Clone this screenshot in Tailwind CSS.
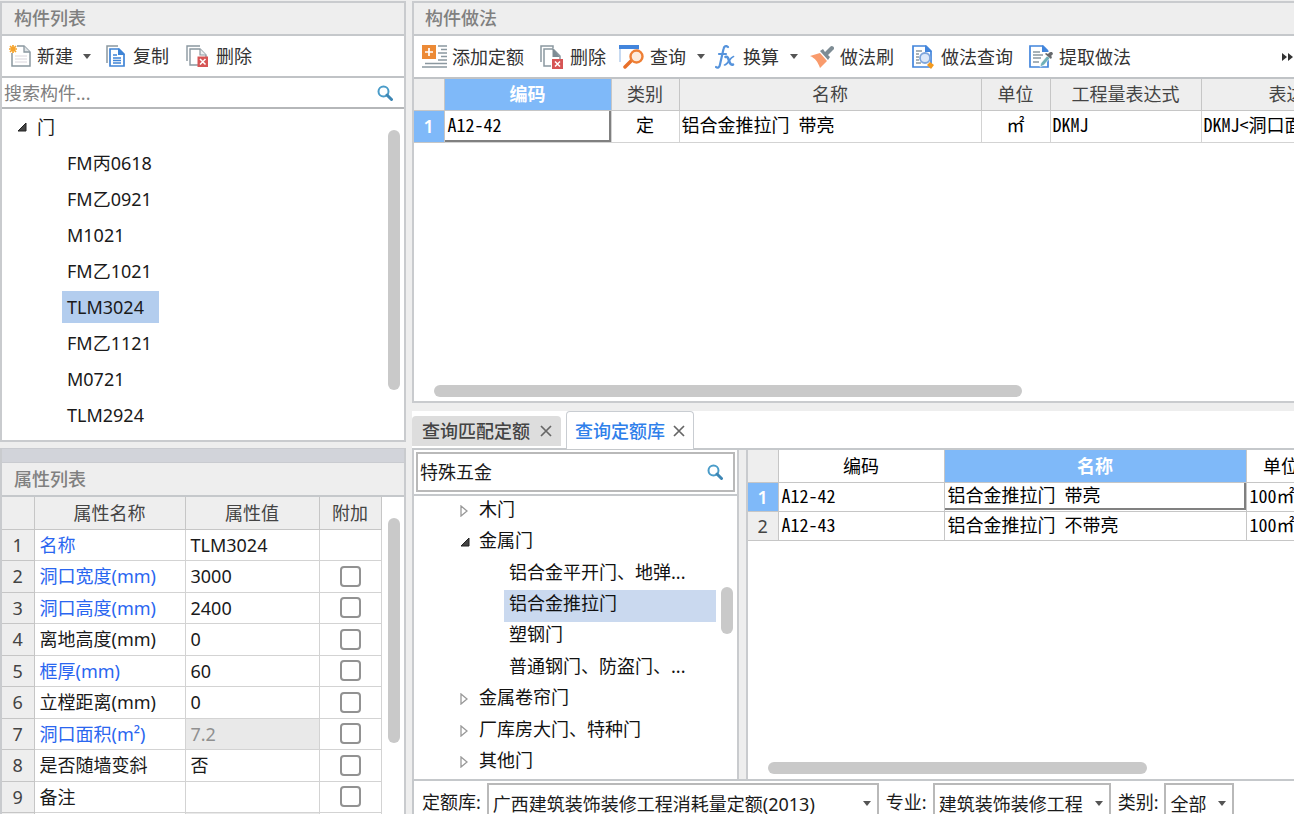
<!DOCTYPE html>
<html lang="zh-CN">
<head>
<meta charset="utf-8">
<title>构件做法</title>
<script src="https://cdn.jsdelivr.net/npm/@tailwindcss/browser@4"></script>
</head>
<body class="flex h-screen gap-[6px] overflow-hidden bg-[#eeeeee] pt-px font-['Noto_Sans','Noto_Sans_CJK_SC',sans-serif] text-[18px] leading-6 text-[#1a1a1a]">

<svg class="hidden">
  <symbol id="search" viewBox="0 0 16 16"><circle cx="6.5" cy="6.5" r="5" fill="none" stroke="#4a9cc9" stroke-width="2"/><path d="M10 10l4.5 4.5" stroke="#3d86b4" stroke-width="3" stroke-linecap="round"/></symbol>
  <symbol id="caret" viewBox="0 0 8 5"><path d="M0 0h8L4 5z" fill="#555"/></symbol>
  <symbol id="open" viewBox="0 0 10 10"><path d="M9 1v8H1z" fill="#444" stroke="#222"/></symbol>
  <symbol id="closed" viewBox="0 0 8 12"><path d="M1 1l6 5-6 5z" fill="#fff" stroke="#999" stroke-width="1.3"/></symbol>
  <symbol id="close" viewBox="0 0 12 12"><path d="M1 1l10 10M11 1L1 11" stroke="#666" stroke-width="1.7"/></symbol>
</svg>

<!-- Left column -->
<aside class="flex w-[406px] shrink-0 flex-col gap-[6px]">
  <section class="flex h-[441px] shrink-0 flex-col border-x-2 border-y-2 border-[#c9cbce] bg-white">
    <h2 class="h-[33px] shrink-0 border-b-2 border-[#c5c8cb] bg-[#eeeeee] pl-3 font-medium leading-[30px] text-[#808080]">构件列表</h2>
    <div class="flex h-[42px] shrink-0 items-center border-b-2 border-[#c0c3c6] pl-[7px] text-[#333]">
      <button class="flex items-center gap-[6px]">
        <svg class="h-[22px] w-[22px]" viewBox="0 0 22 22"><path d="M3 1h12l6 6v14H3z" fill="#fff" stroke="#8b98a0" stroke-width="1.5"/><path d="M15 1v6h6" fill="#dfe3e6" stroke="#8b98a0" stroke-width="1.3"/><path d="M6 11h12M6 14h12M6 17h12" stroke="#d9d5dc"/><path d="M0 0h8v8H0z" fill="#fff"/><path d="M4 0v8M0 4h8M1 1l6 6M7 1L1 7" stroke="#f5a32c" stroke-width="1.7"/></svg>
        新建<svg class="ml-1 h-[5px] w-2"><use href="#caret"/></svg></button>
      <button class="ml-[15px] flex items-center gap-2">
        <svg class="h-[22px] w-[19px]" viewBox="0 0 19 22"><path d="M1 18V1h11" fill="none" stroke="#8b98a0" stroke-width="1.5"/><path d="M4 4h9l5 5v12H4z" fill="#fff" stroke="#3f84d6" stroke-width="1.7"/><path d="M12 3v7h7z" fill="#3f84d6"/><path d="M7 10h4M7 13h8M7 15.500h8M7 18h8" stroke="#3f84d6" stroke-width="1.3"/></svg>复制</button>
      <button class="ml-[17px] flex items-center gap-2">
        <svg class="h-[22px] w-[22px]" viewBox="0 0 22 22"><path d="M1 16V1h13" fill="none" stroke="#8b98a0" stroke-width="1.4"/><path d="M12 20H4V4h10l6 6v3" fill="#fff" stroke="#8b98a0" stroke-width="1.4"/><path d="M14 4v6h6" fill="#eef0f1" stroke="#8b98a0" stroke-width="1.2"/><path d="M11.500 11.500H22V22H11.500z" fill="#d65555"/><path d="M14 14l5.500 5.500M19.500 14L14 19.500" stroke="#fff" stroke-width="1.5"/></svg>删除</button>
    </div>
    <label class="flex h-[31px] shrink-0 items-center border-b-2 border-[#b5b7b9] pl-[2px] pr-[11px]">
      <input aria-label="搜索构件" placeholder="搜索构件..." class="min-w-0 flex-1 outline-none placeholder:text-[#808080]">
      <svg class="h-4 w-4"><use href="#search"/></svg>
    </label>
    <div class="flex min-h-0 flex-1 justify-between pr-1">
      <ul class="pl-[15px] leading-8">
        <li>
          <div class="flex h-9 items-center gap-[10px]"><svg class="h-[10px] w-[10px]"><use href="#open"/></svg>门</div>
          <ul class="pl-[45px]">
            <li class="flex h-9 items-center"><span class="px-[5px]">FM丙0618</span></li>
            <li class="flex h-9 items-center"><span class="px-[5px]">FM乙0921</span></li>
            <li class="flex h-9 items-center"><span class="px-[5px]">M1021</span></li>
            <li class="flex h-9 items-center"><span class="px-[5px]">FM乙1021</span></li>
            <li class="flex h-9 items-center"><span class="bg-[#b3cdee] pl-[5px] pr-[15px]">TLM3024</span></li>
            <li class="flex h-9 items-center"><span class="px-[5px]">FM乙1121</span></li>
            <li class="flex h-9 items-center"><span class="px-[5px]">M0721</span></li>
            <li class="flex h-9 items-center"><span class="px-[5px]">TLM2924</span></li>
          </ul>
        </li>
      </ul>
      <div class="mt-[21px] h-[260px] w-3 rounded-full bg-[#c9c9c9]"></div>
    </div>
  </section>

  <section class="flex min-h-0 flex-1 flex-col overflow-hidden border-x-2 border-[#c9cbce] bg-white">
    <div class="h-[15px] shrink-0 border-y border-[#c9cbd0] bg-[#d2d4da]"></div>
    <h2 class="h-[34px] shrink-0 border-b-2 border-[#c5c8cb] bg-[#eeeeee] pl-3 font-medium leading-8 text-[#808080]">属性列表</h2>
    <div class="flex min-h-0 flex-1 items-start justify-between pr-1">
      <table class="w-[379px] table-fixed border-collapse [&_td]:border-b [&_td]:border-r [&_td]:border-[#d3d3d3] [&_td]:p-0 [&_th]:border-b [&_th]:border-r [&_th]:border-[#c6c6c6] [&_th]:bg-[#eeeeee] [&_th]:p-0 [&_th]:font-normal [&_th]:text-[#444]">
        <colgroup><col class="w-8"><col class="w-[151px]"><col class="w-[134px]"><col class="w-[62px]"></colgroup>
        <thead><tr class="h-8"><th></th><th>属性名称</th><th>属性值</th><th>附加</th></tr></thead>
        <tbody class="[&>tr]:h-[31px] [&>tr:nth-child(even)]:h-8">
          <tr><th>1</th><td><span class="pl-[5px] text-[#2a66f0]">名称</span></td><td><span class="pl-[5px]">TLM3024</span></td><td></td></tr>
          <tr><th>2</th><td><span class="pl-[5px] text-[#2a66f0]">洞口宽度(mm)</span></td><td><span class="pl-[5px]">3000</span></td><td><input type="checkbox" aria-label="附加 洞口宽度" class="mx-auto block size-[21px] appearance-none rounded border-2 border-[#929292]"></td></tr>
          <tr><th>3</th><td><span class="pl-[5px] text-[#2a66f0]">洞口高度(mm)</span></td><td><span class="pl-[5px]">2400</span></td><td><input type="checkbox" aria-label="附加 洞口高度" class="mx-auto block size-[21px] appearance-none rounded border-2 border-[#929292]"></td></tr>
          <tr><th>4</th><td><span class="pl-[5px]">离地高度(mm)</span></td><td><span class="pl-[5px]">0</span></td><td><input type="checkbox" aria-label="附加 离地高度" class="mx-auto block size-[21px] appearance-none rounded border-2 border-[#929292]"></td></tr>
          <tr><th>5</th><td><span class="pl-[5px] text-[#2a66f0]">框厚(mm)</span></td><td><span class="pl-[5px]">60</span></td><td><input type="checkbox" aria-label="附加 框厚" class="mx-auto block size-[21px] appearance-none rounded border-2 border-[#929292]"></td></tr>
          <tr><th>6</th><td><span class="pl-[5px]">立樘距离(mm)</span></td><td><span class="pl-[5px]">0</span></td><td><input type="checkbox" aria-label="附加 立樘距离" class="mx-auto block size-[21px] appearance-none rounded border-2 border-[#929292]"></td></tr>
          <tr><th>7</th><td><span class="pl-[5px] text-[#2a66f0]">洞口面积(m²)</span></td><td class="bg-[#e9e9e9]"><span class="pl-[5px] text-[#909090]">7.2</span></td><td><input type="checkbox" aria-label="附加 洞口面积" class="mx-auto block size-[21px] appearance-none rounded border-2 border-[#929292]"></td></tr>
          <tr><th>8</th><td><span class="pl-[5px]">是否随墙变斜</span></td><td><span class="pl-[5px]">否</span></td><td><input type="checkbox" aria-label="附加 是否随墙变斜" class="mx-auto block size-[21px] appearance-none rounded border-2 border-[#929292]"></td></tr>
          <tr><th>9</th><td><span class="pl-[5px]">备注</span></td><td></td><td><input type="checkbox" aria-label="附加 备注" class="mx-auto block size-[21px] appearance-none rounded border-2 border-[#929292]"></td></tr>
          <tr><th></th><td></td><td class="bg-[#e9e9e9]"></td><td></td></tr>
        </tbody>
      </table>
      <div class="mt-[21px] h-[225px] w-3 rounded-full bg-[#c9c9c9]"></div>
    </div>
  </section>
</aside>

<!-- Right column -->
<main class="flex min-w-0 flex-1 flex-col">
  <section class="flex h-[402px] shrink-0 flex-col overflow-hidden border-y-2 border-l-2 border-[#c9cbce] bg-white">
    <h2 class="h-[33px] shrink-0 border-b-2 border-[#c5c8cb] bg-[#eeeeee] pl-[11px] font-medium leading-[30px] text-[#808080]">构件做法</h2>
    <div class="flex h-[43px] shrink-0 items-center border-b-2 border-[#c0c3c6] pl-2 pr-px text-[#333] [&>button]:flex [&>button]:shrink-0 [&>button]:items-center">
      <button class="gap-[5px]">
        <svg class="h-6 w-[25px]" viewBox="0 0 25 24"><path d="M0 0h14v14H0z" fill="#ec8a36"/><path d="M7 3v8M3 7h8" stroke="#fff" stroke-width="1.7"/><path d="M16 1h9M19 4.500h6M16 8h9M19 11.500h6M16 15h9M3 18.500h22M0 22h25" stroke="#8b98a0" stroke-width="1.5"/></svg>添加定额</button>
      <button class="ml-[16px] gap-[7px]">
        <svg class="h-6 w-[23px]" viewBox="0 0 23 24"><path d="M1 17V1h12v2" fill="none" stroke="#8b98a0" stroke-width="1.5"/><path d="M11 21H4V4h9l7 7v3" fill="#fff" stroke="#8b98a0" stroke-width="1.5"/><path d="M12.500 3v9H20z" fill="#7e8c94"/><path d="M12 14h11v10H12z" fill="#d65555"/><path d="M15 16.500l5 5M20 16.500l-5 5" stroke="#fff" stroke-width="1.5"/></svg>删除</button>
      <button class="ml-[13px] gap-[5px]">
        <svg class="h-6 w-[26px]" viewBox="0 0 26 24"><path d="M1 4v13M0 3h19v3" fill="none" stroke="#8fb4e3"/><path d="M0 0h20v4H0z" fill="#4285dc"/><path d="M6 22l7-7" stroke="#e8702a" stroke-width="3.500" stroke-linecap="round"/><circle cx="17.500" cy="11.500" r="6" fill="#fdeadb" stroke="#ee7f35" stroke-width="2.400"/></svg>查询<svg class="ml-[6px] h-[5px] w-2"><use href="#caret"/></svg></button>
      <button class="ml-[10px] gap-2">
        <svg class="h-6 w-5" viewBox="0 0 20 24" fill="none" stroke="#5593dc" stroke-linecap="round"><path d="M13 2C11 0 9 1.500 8.500 4L5 19.500C4.500 22.500 2.500 23.500 1 22M4 9h7" stroke-width="2.200"/><path d="M10.500 12c4-2 3 9.500 7.500 7.500" stroke-width="2.600"/><path d="M18.500 11.500c-4 1-5 8-9 8.500" stroke-width="1.700"/></svg>换算<svg class="ml-[3px] h-[5px] w-2"><use href="#caret"/></svg></button>
      <button class="ml-[12px] gap-[6px]">
        <svg class="h-6 w-6" viewBox="0 0 24 24"><path d="M0 11l10-3 7 8-7 7C8 17 5 13 0 11z" fill="#f99b6c"/><path d="M10 6l3-2 2 3 5-5c2-3 6 1 3 3l-5 5 2 2-2 3z" fill="#7e8c94"/></svg>做法刷</button>
      <button class="ml-[18px] gap-[6px]">
        <svg class="h-6 w-[23px]" viewBox="0 0 23 24"><path d="M1 1h13l5 5v16H1z" fill="#fff" stroke="#4285dc" stroke-width="1.700"/><path d="M13 0v7h7z" fill="#4285dc"/><path d="M4 6h6M4 9h3M4 12h3M4 15h3M4 18h5" stroke="#8b98a0" stroke-width="1.300"/><circle cx="13" cy="13" r="5" fill="#dce8f8" stroke="#7ea6dc" stroke-width="1.800"/><path d="M15 20l3-3 4 3-3 4z" fill="#f39a1f"/></svg>做法查询</button>
      <button class="ml-[16px] gap-[6px]">
        <svg class="h-6 w-6" viewBox="0 0 24 24"><path d="M19 12v10H1V1h13l5 5" fill="#fff" stroke="#4285dc" stroke-width="1.700"/><path d="M13 0v7h7z" fill="#4285dc"/><path d="M4 7h7M4 10h10M4 13h8M4 17h6" stroke="#8b98a0" stroke-width="1.300"/><path d="M11 22l1-4 6-7 3 2-6 7z" fill="#6fb0b8" stroke="#fff" stroke-width=".6"/><path d="M16 9l6 5 1-2-1-1c3-2 2-4 0-4s-2 1-3 2l-2-1z" fill="#66696c"/></svg>提取做法</button>
      <button class="ml-auto" aria-label="更多"><svg class="h-2 w-[11px]" viewBox="0 0 11 8"><path d="M0 0l5 4-5 4zM6 0l5 4-5 4z" fill="#333"/></svg></button>
    </div>
    <div class="min-h-0 flex-1 overflow-hidden">
      <table class="w-[1012px] table-fixed border-collapse text-black [&_td]:border-b [&_td]:border-r [&_td]:border-[#d3d3d3] [&_td]:p-0 [&_td]:pb-1 [&_th]:border-b [&_th]:border-r [&_th]:border-[#c6c6c6] [&_th]:p-0">
        <colgroup><col class="w-[30px]"><col class="w-[167px]"><col class="w-[68px]"><col class="w-[302px]"><col class="w-[69px]"><col class="w-[151px]"><col class="w-[225px]"></colgroup>
        <thead><tr class="h-[31px] bg-[#eeeeee] text-[#444] [&>th]:font-normal"><th></th><th class="bg-[#7fb9f9] text-white"><b>编码</b></th><th>类别</th><th>名称</th><th>单位</th><th>工程量表达式</th><th>表达式说明</th></tr></thead>
        <tbody class="font-['Noto_Sans_Mono_CJK_SC','Liberation_Mono','Noto_Sans_CJK_SC',monospace]"><tr class="h-8"><th class="bg-[#7fb9f9] font-['Noto_Sans'] font-semibold text-white">1</th><td class="pb-0!"><div class="h-[31px] border-b-2 border-r-2 border-[#808080] pl-[3px] leading-[27px]">A12-42</div></td><td class="text-center">定</td><td><span class="pl-[2px]">铝合金推拉门 带亮</span></td><td class="text-center">㎡</td><td><span class="pl-[2px]">DKMJ</span></td><td><span class="pl-[2px]">DKMJ&lt;洞口面积&gt;</span></td></tr></tbody>
      </table>
    </div>
    <div class="mb-1 ml-5 mr-[272px] h-3 shrink-0 rounded-full bg-[#c9c9c9]"></div>
  </section>

  <div class="mt-2 flex h-[39px] shrink-0 items-end gap-[5px] border-b-2 border-[#c5c8cb] bg-white">
    <button class="mb-[2px] flex h-[30px] items-center gap-[10px] rounded-t bg-[#dddddd] pl-[10px] pr-[9px] font-medium text-[#444]">查询匹配定额<svg class="h-3 w-3"><use href="#close"/></svg></button>
    <button class="-mb-px flex h-[38px] items-center gap-2 rounded-t border border-b-0 border-[#c9cdd2] bg-white px-2 font-medium text-[#2f80ea]">查询定额库<svg class="h-3 w-3"><use href="#close"/></svg></button>
  </div>

  <div class="flex h-[329px] shrink-0">
    <section class="flex w-[327px] shrink-0 flex-col border-x-2 border-[#c9cbce] bg-white">
      <div class="shrink-0 border-b-2 border-[#c5c8cb] px-[2px] py-[2px]">
        <label class="flex h-10 items-center border-2 border-[#b9b9b9] pl-[2px] pr-[10px]">
          <input aria-label="搜索定额" value="特殊五金" class="min-w-0 flex-1 outline-none">
          <svg class="h-4 w-4"><use href="#search"/></svg>
        </label>
      </div>
      <div class="flex min-h-0 flex-1 pr-1">
        <ul class="grid min-w-0 flex-1 grid-rows-9 pl-[46px] text-[#111]">
          <li class="flex items-center gap-[11px] pb-[6px]"><svg class="mt-1 h-3 w-2"><use href="#closed"/></svg>木门</li>
          <li class="flex items-center gap-[9px] pb-[6px]"><svg class="mt-1 h-[10px] w-[10px]"><use href="#open"/></svg>金属门</li>
          <li class="ml-[44px] flex items-center pb-[6px] pl-[5px]">铝合金平开门、地弹...</li>
          <li class="ml-[44px] mr-[5px] flex items-center bg-[#cad9ef] pb-[6px] pl-[5px]">铝合金推拉门</li>
          <li class="ml-[44px] flex items-center pb-[6px] pl-[5px]">塑钢门</li>
          <li class="ml-[44px] flex items-center pb-[6px] pl-[5px]">普通钢门、防盗门、...</li>
          <li class="flex items-center gap-[11px] pb-[6px]"><svg class="mt-1 h-3 w-2"><use href="#closed"/></svg>金属卷帘门</li>
          <li class="flex items-center gap-[11px] pb-[6px]"><svg class="mt-1 h-3 w-2"><use href="#closed"/></svg>厂库房大门、特种门</li>
          <li class="flex items-center gap-[11px] pb-[6px]"><svg class="mt-1 h-3 w-2"><use href="#closed"/></svg>其他门</li>
        </ul>
        <div class="mt-[91px] h-[47px] w-3 shrink-0 rounded-full bg-[#c9c9c9]"></div>
      </div>
    </section>
    <section class="ml-[7px] flex min-w-0 flex-1 flex-col overflow-hidden border-l-2 border-[#c9cbce] bg-white">
      <div class="min-h-0 flex-1 overflow-hidden">
        <table class="w-[568px] table-fixed border-collapse text-black [&_td]:border-b [&_td]:border-r [&_td]:border-[#c6c6c6] [&_td]:p-0 [&_td]:pb-1 [&_th]:border-b [&_th]:border-r [&_th]:border-[#c6c6c6] [&_th]:p-0">
          <colgroup><col class="w-[30px]"><col class="w-[166px]"><col class="w-[302px]"><col class="w-[70px]"></colgroup>
          <thead><tr class="h-[32px] [&>th]:font-normal"><th class="bg-[#eeeeee]"></th><th>编码</th><th class="bg-[#7fb9f9] text-white"><b>名称</b></th><th>单位</th></tr></thead>
          <tbody class="font-['Noto_Sans_Mono_CJK_SC','Liberation_Mono','Noto_Sans_CJK_SC',monospace]">
            <tr class="h-[28px]"><th class="bg-[#7fb9f9] font-['Noto_Sans'] font-semibold text-white">1</th><td><span class="pl-[3px]">A12-42</span></td><td class="pb-0!"><div class="h-[27px] border-b-2 border-r-2 border-[#808080] pl-[3px] leading-[23px]">铝合金推拉门 带亮</div></td><td><span class="pl-[3px]">100㎡</span></td></tr>
            <tr class="h-[28px]"><th class="bg-[#eeeeee] font-['Noto_Sans'] font-normal text-[#444]">2</th><td><span class="pl-[3px]">A12-43</span></td><td><span class="pl-[3px]">铝合金推拉门 不带亮</span></td><td><span class="pl-[3px]">100㎡</span></td></tr>
          </tbody>
        </table>
      </div>
      <div class="mb-[5px] ml-5 mr-[147px] h-3 shrink-0 rounded-full bg-[#c9c9c9]"></div>
    </section>
  </div>

  <form class="flex h-[42px] shrink-0 items-start border-l-2 border-t-2 border-[#c5c8cb] bg-white pl-2 pt-[2px] leading-[38px]">
    <label for="lib">定额库:</label>
    <div class="relative ml-[6px] w-[392px]"><select id="lib" class="h-9 w-full appearance-none border-2 border-[#b9b9b9] pl-1"><option>广西建筑装饰装修工程消耗量定额(2013)</option></select><svg class="absolute right-2 top-[18px] h-[5px] w-2"><use href="#caret"/></svg></div>
    <label for="major" class="ml-[7px]">专业:</label>
    <div class="relative ml-[6px] w-[178px]"><select id="major" class="h-9 w-full appearance-none border-2 border-[#b9b9b9] pl-1"><option>建筑装饰装修工程</option></select><svg class="absolute right-2 top-[18px] h-[5px] w-2"><use href="#caret"/></svg></div>
    <label for="kind" class="ml-[7px]">类别:</label>
    <div class="relative ml-[6px] w-[70px]"><select id="kind" class="h-9 w-full appearance-none border-2 border-[#b9b9b9] pl-1"><option>全部</option></select><svg class="absolute right-2 top-[18px] h-[5px] w-2"><use href="#caret"/></svg></div>
  </form>
</main>
</body>
</html>
